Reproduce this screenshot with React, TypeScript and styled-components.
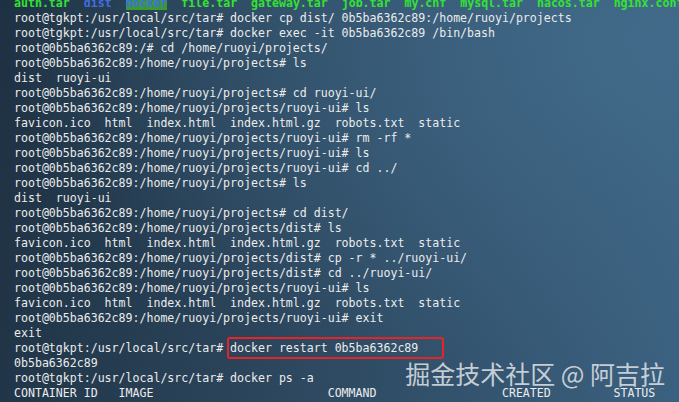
import React from "react";
import styled, { createGlobalStyle } from "styled-components";

const Global = createGlobalStyle`
  html, body { margin: 0; padding: 0; background: #22364a; }
`;

const Terminal = styled.div`
  position: relative;
  width: 679px;
  height: 402px;
  overflow: hidden;
  box-sizing: border-box;
  padding-left: 14px;
  background:
    radial-gradient(ellipse at 100% 10%, rgba(66, 108, 140, 0.9) 0%, rgba(66, 108, 140, 0) 70%),
    linear-gradient(100deg, #1e3142 0%, #2c465d 45%, #3b6180 100%);
  font-family: "DejaVu Sans Mono", "Liberation Mono", monospace;
  font-size: 11.59px;
  line-height: 15px;
  color: #ececec;
`;

const Screen = styled.div`
  margin-top: -4px;
  display: flex;
  flex-direction: column;
`;

const Line = styled.div`
  white-space: pre;
  height: 15px;
`;

const Ls = styled.span<{ $kind: "file" | "dir" | "ow" }>`
  font-weight: bold;
  color: ${(p) => (p.$kind === "file" ? "#34e234" : "#3f6fe0")};
  background: ${(p) => (p.$kind === "ow" ? "#3c9a2e" : "transparent")};
`;

const Boxed = styled.span`
  position: relative;
  &::after {
    content: "";
    position: absolute;
    left: -3px;
    right: -26px;
    top: -4px;
    bottom: -4px;
    border: 2px solid #e5242a;
    border-radius: 3px;
  }
`;

const Watermark = styled.div`
  position: absolute;
  right: 14px;
  top: 358px;
  font-family: "Noto Sans CJK SC", "Noto Sans", sans-serif;
  font-size: 25px;
  line-height: 30px;
  color: rgba(225, 228, 232, 0.85);
  white-space: pre;
`;

const u = "root@tgkpt:/usr/local/src/tar# ";
const c = "root@0b5ba6362c89:";

const plain: string[] = [
  `${u}docker cp dist/ 0b5ba6362c89:/home/ruoyi/projects`,
  `${u}docker exec -it 0b5ba6362c89 /bin/bash`,
  `${c}/# cd /home/ruoyi/projects/`,
  `${c}/home/ruoyi/projects# ls`,
  `dist  ruoyi-ui`,
  `${c}/home/ruoyi/projects# cd ruoyi-ui/`,
  `${c}/home/ruoyi/projects/ruoyi-ui# ls`,
  `favicon.ico  html  index.html  index.html.gz  robots.txt  static`,
  `${c}/home/ruoyi/projects/ruoyi-ui# rm -rf *`,
  `${c}/home/ruoyi/projects/ruoyi-ui# ls`,
  `${c}/home/ruoyi/projects/ruoyi-ui# cd ../`,
  `${c}/home/ruoyi/projects# ls`,
  `dist  ruoyi-ui`,
  `${c}/home/ruoyi/projects# cd dist/`,
  `${c}/home/ruoyi/projects/dist# ls`,
  `favicon.ico  html  index.html  index.html.gz  robots.txt  static`,
  `${c}/home/ruoyi/projects/dist# cp -r * ../ruoyi-ui/`,
  `${c}/home/ruoyi/projects/dist# cd ../ruoyi-ui/`,
  `${c}/home/ruoyi/projects/ruoyi-ui# ls`,
  `favicon.ico  html  index.html  index.html.gz  robots.txt  static`,
  `${c}/home/ruoyi/projects/ruoyi-ui# exit`,
  `exit`,
];

const after: string[] = [
  `0b5ba6362c89`,
  `${u}docker ps -a`,
  `CONTAINER ID   IMAGE                         COMMAND                  CREATED         STATUS`,
];

export default function App() {
  return (
    <>
      <Global />
      <Terminal>
        <Screen>
          <Line>
            <Ls $kind="file">auth.tar</Ls>{"  "}
            <Ls $kind="dir">dist</Ls>{"  "}
            <Ls $kind="ow">docker</Ls>{"  "}
            <Ls $kind="file">file.tar</Ls>{"  "}
            <Ls $kind="file">gateway.tar</Ls>{"  "}
            <Ls $kind="file">job.tar</Ls>{"  "}
            <Ls $kind="file">my.cnf</Ls>{"  "}
            <Ls $kind="file">mysql.tar</Ls>{"  "}
            <Ls $kind="file">nacos.tar</Ls>{"  "}
            <Ls $kind="file">nginx.conf</Ls>
          </Line>
          {plain.map((t, i) => (
            <Line key={"p" + i}>{t}</Line>
          ))}
          <Line>
            {u}
            <Boxed>docker restart 0b5ba6362c89</Boxed>
          </Line>
          {after.map((t, i) => (
            <Line key={"a" + i}>{t}</Line>
          ))}
        </Screen>
        <Watermark>掘金技术社区 @ 阿吉拉</Watermark>
      </Terminal>
    </>
  );
}
